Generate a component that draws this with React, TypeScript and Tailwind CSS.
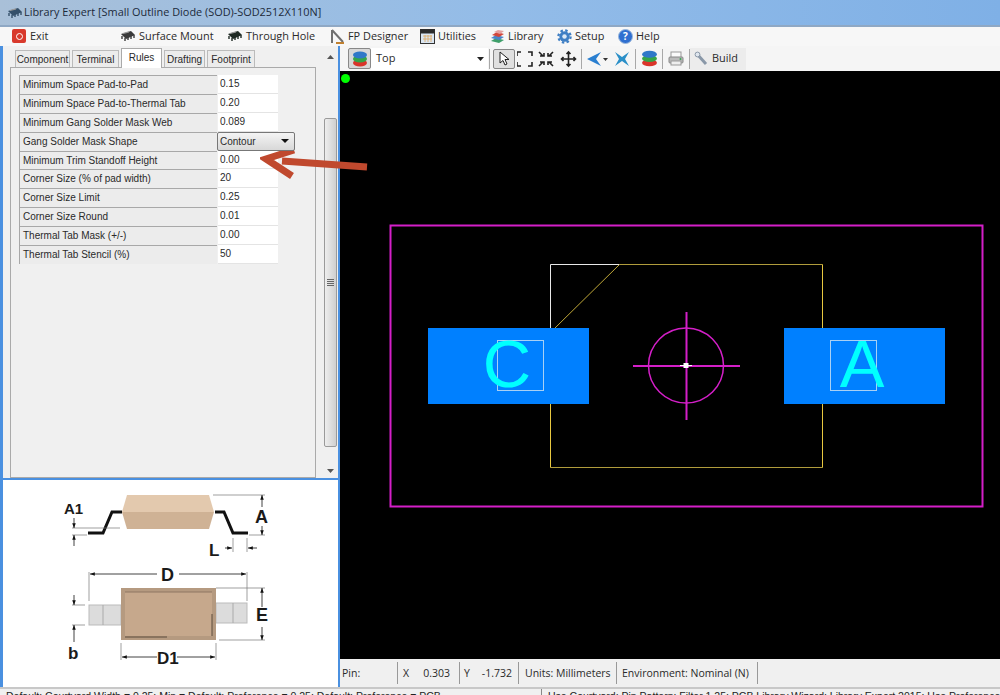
import { Fragment } from 'react';

const rows: [string, string][] = [
  ['Minimum Space Pad-to-Pad', '0.15'],
  ['Minimum Space Pad-to-Thermal Tab', '0.20'],
  ['Minimum Gang Solder Mask Web', '0.089'],
  ['Gang Solder Mask Shape', 'Contour'],
  ['Minimum Trim Standoff Height', '0.00'],
  ['Corner Size (% of pad width)', '20'],
  ['Corner Size Limit', '0.25'],
  ['Corner Size Round', '0.01'],
  ['Thermal Tab Mask (+/-)', '0.00'],
  ['Thermal Tab Stencil (%)', '50'],
];

const tabs: [string, string][] = [
  ['Component', 'w-[55px]'],
  ['Terminal', 'w-[47px]'],
  ['Rules', 'w-[41px]'],
  ['Drafting', 'w-[41px]'],
  ['Footprint', 'w-[48px]'],
];

function Chip({ color }: { color: string }) {
  return (
    <svg width="16" height="14" viewBox="0 0 16 14">
      <path d="M1 5L11 2L15 6L6 10z" fill={color} />
      <path d="M2 7V10M5 9V12M8 8V11M11 7V10M14 6V9" stroke={color} strokeWidth="1.4" />
      <path d="M3 4.5L9 2.8" stroke="#9a9a9a" strokeWidth="1.2" />
    </svg>
  );
}

function Stack({ size = 16 }: { size?: number }) {
  return (
    <svg width={size} height={size} viewBox="0 0 16 16">
      <ellipse cx="8" cy="12" rx="7" ry="3.4" fill="#d9342a" />
      <ellipse cx="8" cy="8" rx="7" ry="3.4" fill="#35a548" />
      <ellipse cx="8" cy="4" rx="7" ry="3.4" fill="#2f78c8" />
    </svg>
  );
}

function MenuItem({ icon, label, w }: { icon: React.ReactNode; label: string; w: string }) {
  return (
    <div className={`flex items-center gap-[3px] ${w}`}>
      {icon}
      <span>{label}</span>
    </div>
  );
}

function Divider({ className = '' }: { className?: string }) {
  return <div className={`w-px h-[20px] bg-[#a8a8a8] ${className}`} />;
}

function Canvas() {
  return (
    <div className="flex-1 bg-black relative overflow-hidden">
      <svg width="660" height="588" viewBox="340 71 660 588" className="block">
        <circle cx="345.5" cy="78.5" r="4.5" fill="#00ff00" />
        <rect x="390.5" y="225.5" width="592" height="281" fill="none" stroke="#d41fc8" strokeWidth="2" />
        <path d="M550.5 264.5H619.5M550.5 264.5V328" stroke="#e8e8e8" fill="none" />
        <path d="M619.5 264.5H822.5M822.5 467.5H550.5" stroke="#b09c3c" fill="none" />
        <path d="M822.5 264.5V467.5M550.5 467.5V403" stroke="#e8c840" fill="none" />
        <path d="M619.5 264.5L555 328" stroke="#c0a838" fill="none" />
        <rect x="428" y="328" width="161" height="76" fill="#0080ff" />
        <rect x="784" y="328" width="161" height="76" fill="#0080ff" />
        <rect x="497.5" y="340.5" width="46" height="50" fill="none" stroke="#a8d0f4" />
        <rect x="830.5" y="340.5" width="46" height="50" fill="none" stroke="#a8d0f4" />
        <circle cx="686" cy="365.5" r="37.5" fill="none" stroke="#d41fc8" strokeWidth="1.5" />
        <path d="M633 366H740M686.5 312V420" stroke="#d41fc8" strokeWidth="2" />
        <path d="M680 365.5H692" stroke="#fff" />
        <rect x="683.5" y="363" width="5" height="5" fill="#fff" />
        <text x="507" y="387" textAnchor="middle" fill="#00ffff" fontSize="67" fontFamily="Liberation Sans, sans-serif">C</text>
        <text x="862" y="387" textAnchor="middle" fill="#00ffff" fontSize="67" fontFamily="Liberation Sans, sans-serif">A</text>
      </svg>
    </div>
  );
}

function PackageDrawing() {
  const label = { fontFamily: 'Liberation Sans, sans-serif', fontSize: 18, fill: '#1a1a1a', fontWeight: 700 };
  return (
    <svg width="335" height="207" viewBox="3 480 335 207" className="block">
      <defs>
        <marker id="arr" viewBox="0 0 6 6" refX="6" refY="3" markerWidth="6" markerHeight="6" orient="auto-start-reverse">
          <path d="M0 0.8L6 3L0 5.2z" fill="#111" />
        </marker>
      </defs>
      {/* side view */}
      <path d="M88 533H103L112 512H122M215 512H224L233 533H248" fill="none" stroke="#111" strokeWidth="3" />
      <path d="M127 495H209L214 512H122z" fill="#e3c9ae" />
      <path d="M122 512H214L209 529H127z" fill="#cfb295" />
      <g stroke="#777" strokeWidth="0.7" fill="none">
        <path d="M213 495H265M249 535H265M72 528H120M72 535H87M233 538V552M247 538V552" />
      </g>
      <g stroke="#111" strokeWidth="0.8" fill="none" markerEnd="url(#arr)">
        <path d="M262 507V495" />
        <path d="M262 526V535" />
        <path d="M74 518V528" />
        <path d="M74 546V535" />
        <path d="M225 548H232" />
        <path d="M257 548H248" />
      </g>
      {/* top view */}
      <rect x="89" y="605" width="32" height="20" fill="#dcdcdc" stroke="#bbb" />
      <path d="M103 605V625" stroke="#aaa" />
      <rect x="216" y="603" width="31" height="20" fill="#dcdcdc" stroke="#bbb" />
      <path d="M233 603V623" stroke="#aaa" />
      <rect x="121" y="588" width="95" height="52" fill="#c6a88c" />
      <path d="M121 588H216V640H121zM125 592V636H212V592z" fill="#b59a80" fillRule="evenodd" />
      <path d="M125 592H212" stroke="#8e7662" />
      <path d="M125 637H167M212 614V636" stroke="#5d4c3c" strokeWidth="1" />
      <g stroke="#777" strokeWidth="0.7" fill="none">
        <path d="M89 572V601M247 572V601M216 588H265M219 640H265M121 643V660M216 643V660M72 605H85M72 625H85" />
      </g>
      <g stroke="#111" strokeWidth="0.8" fill="none" markerEnd="url(#arr)">
        <path d="M157 574H90" />
        <path d="M179 574H246" />
        <path d="M262 607V588" />
        <path d="M262 627V640" />
        <path d="M74 595V605" />
        <path d="M74 642V625" />
        <path d="M157 657H122" />
        <path d="M177 657H215" />
      </g>
      <text x="64" y="514" style={{ ...label, fontSize: 15 }}>A1</text>
      <text x="255" y="523" style={label}>A</text>
      <text x="209" y="556" style={{ ...label, fontSize: 17 }}>L</text>
      <text x="161" y="581" style={label}>D</text>
      <text x="256" y="621" style={label}>E</text>
      <text x="68" y="659" style={{ ...label, fontSize: 17 }}>b</text>
      <text x="157" y="664" style={{ ...label, fontSize: 17 }}>D1</text>
    </svg>
  );
}

export default function App() {
  return (
    <div className="w-[1000px] h-[695px] overflow-hidden relative bg-[#f0f0f0] text-[#2a2a2a] font-['Liberation_Sans',sans-serif]">
      {/* title bar */}
      <div className="h-[25px] bg-gradient-to-r from-[#a9c0d8] via-[#93bce8] to-[#7fb0e6] flex items-center pl-[7px] gap-[1px] text-[10.9px] text-[#1c2a3a] font-['Open_Sans',sans-serif]">
        <Chip color="#35506a" />
        <span>Library Expert [Small Outline Diode (SOD)-SOD2512X110N]</span>
      </div>

      {/* menu */}
      <div className="h-[21px] border-t-2 border-[#8fa8c4] flex items-center text-[10.9px] pl-[12px] bg-[#f7f7f7] font-['Open_Sans',sans-serif]">
        <MenuItem
          w="w-[108px]"
          label="Exit"
          icon={
            <div className="w-[14px] h-[14px] rounded-[2px] bg-[#d8392c] flex items-center justify-center mr-[1px]">
              <div className="w-[7px] h-[7px] rounded-full border border-white" />
            </div>
          }
        />
        <MenuItem w="w-[107px]" label="Surface Mount" icon={<Chip color="#3a3a3a" />} />
        <MenuItem w="w-[103px]" label="Through Hole" icon={<Chip color="#1f2a24" />} />
        <MenuItem
          w="w-[90px]"
          label="FP Designer"
          icon={
            <svg width="15" height="15" viewBox="0 0 15 15">
              <path d="M2 1L13 13M2 1V14" stroke="#707070" strokeWidth="2" fill="none" />
              <path d="M6 14H14" stroke="#c08030" strokeWidth="2" />
            </svg>
          }
        />
        <MenuItem
          w="w-[70px]"
          label="Utilities"
          icon={
            <svg width="15" height="15" viewBox="0 0 15 15">
              <rect x="0.5" y="0.5" width="14" height="14" fill="#dbe6f2" stroke="#333" />
              <rect x="0.5" y="0.5" width="14" height="4" fill="#2c2c2c" />
              <path d="M3 7H12M3 10H12M5 6V13M8 6V13M11 6V13" stroke="#e0a860" strokeWidth="0.8" />
            </svg>
          }
        />
        <MenuItem
          w="w-[67px]"
          label="Library"
          icon={
            <svg width="15" height="15" viewBox="0 0 15 15">
              <path d="M1 12L9 14L14 11L6 9z" fill="#3f9f6a" />
              <path d="M1 9L9 11L14 8L6 6z" fill="#4a84c8" />
              <path d="M2 6L9 8L14 5L7 3z" fill="#d2463c" />
              <path d="M4 3L10 5L14 2L8 1z" fill="#e4a0a0" />
            </svg>
          }
        />
        <MenuItem
          w="w-[61px]"
          label="Setup"
          icon={
            <svg width="15" height="15" viewBox="0 0 16 16">
              <circle cx="8" cy="8" r="5.5" fill="#3f7fc4" />
              <circle cx="8" cy="8" r="6.5" fill="none" stroke="#3f7fc4" strokeWidth="2.4" strokeDasharray="2.6 2.5" />
              <circle cx="8" cy="8" r="2.4" fill="#dce9f6" />
            </svg>
          }
        />
        <MenuItem
          w="w-[50px]"
          label="Help"
          icon={
            <div className="w-[15px] h-[15px] rounded-full bg-[#2f6fd0] border border-[#9ab8dc] text-white text-[10px] leading-[13px] text-center font-bold">
              ?
            </div>
          }
        />
      </div>

      <div className="flex h-[641px]">
        {/* left column */}
        <div className="w-[340px] shrink-0 flex flex-col border-l-[3px] border-r-2 border-[#4a90e0]">
          <div className="h-[434px] flex bg-[#f0f0f0] border-b-2 border-[#4a90e0]">
            <div className="w-[320px] pl-[7px] pt-[2px] relative">
              <div className="flex items-end gap-[2px] h-[19px] pl-[5px] text-[10px]">
                {tabs.map(([t, w]) => (
                  <div
                    key={t}
                    className={
                      t === 'Rules'
                        ? `${w} h-[20px] text-center bg-white border border-b-0 border-[#aaa] leading-[17px] relative z-10 mb-[-1px]`
                        : `${w} h-[17px] text-center bg-[#ececec] border border-b-0 border-[#bbb] leading-[18px]`
                    }
                  >
                    {t}
                  </div>
                ))}
              </div>
              <div className="h-[411px] border border-[#aaa] bg-[#f0f0f0] pl-[8px] pt-[7px] w-[306px]">
                <div className="grid grid-cols-[198px_61px] auto-rows-[18.9px] text-[10px]">
                  {rows.map(([name, value]) => (
                    <Fragment key={name}>
                      <div className="border-t border-l border-[#a8a8a8] bg-[#ececec] pl-[3px] leading-[18px] whitespace-nowrap">
                        {name}
                      </div>
                      {value === 'Contour' ? (
                        <div className="bg-gradient-to-b from-[#f4f4f4] to-[#d8d8d8] border border-[#777] rounded-[2px] w-[78px] h-[19px] flex items-center justify-between pl-[2px] pr-[5px] relative z-10">
                          <span>{value}</span>
                          <svg width="8" height="4" viewBox="0 0 8 4">
                            <path d="M0 0H8L4 4z" fill="#111" />
                          </svg>
                        </div>
                      ) : (
                        <div className="bg-white border-b border-[#e4e4e4] pl-[2px] leading-[18px] ml-px">{value}</div>
                      )}
                    </Fragment>
                  ))}
                </div>
              </div>
            </div>
            {/* scrollbar */}
            <div className="w-[15px] flex flex-col items-center text-[#444] bg-[#f0f0f0]">
              <div className="h-[22px] flex items-center justify-center">
                <svg width="7" height="4" viewBox="0 0 7 4">
                  <path d="M0 4H7L3.5 0z" fill="#555" />
                </svg>
              </div>
              <div className="h-[329px] w-[13px] mt-[50px] rounded-[2px] border border-[#9a9a9a] bg-gradient-to-r from-[#eeeeee] to-[#cfcfcf] flex flex-col gap-px items-center justify-center">
                <div className="w-[7px] h-px bg-[#666]" />
                <div className="w-[7px] h-px bg-[#666]" />
                <div className="w-[7px] h-px bg-[#666]" />
                <div className="w-[7px] h-px bg-[#666]" />
              </div>
              <div className="flex-1 flex items-end pb-[5px]">
                <svg width="7" height="4" viewBox="0 0 7 4">
                  <path d="M0 0H7L3.5 4z" fill="#555" />
                </svg>
              </div>
            </div>
          </div>
          <div className="flex-1 bg-white">
            <PackageDrawing />
          </div>
        </div>

        {/* right column */}
        <div className="flex-1 flex flex-col">
          <div className="h-[25px] bg-[#f5f5f5] flex items-center pl-[8px] text-[11px] font-['Open_Sans',sans-serif]">
            <div className="w-[23px] h-[21px] border border-[#888] rounded-[2px] bg-[#d8d8d8] flex items-center justify-center">
              <Stack />
            </div>
            <div className="w-[117px] h-[22px] bg-white flex items-center justify-between pl-[5px] pr-[4px]">
              <span>Top</span>
              <svg width="7" height="4" viewBox="0 0 7 4">
                <path d="M0 0H7L3.5 4z" fill="#222" />
              </svg>
            </div>
            <Divider className="ml-[1px]" />
            <div className="w-[22px] h-[20px] ml-[3px] border border-[#888] rounded-[2px] bg-[#e0e0e0] flex items-center justify-center">
              <svg width="12" height="15" viewBox="0 0 12 15">
                <path d="M2 1V12L5 9.5L7 14L9 13L7 8.5H11z" fill="#fff" stroke="#222" />
              </svg>
            </div>
            <svg width="60" height="18" viewBox="0 0 60 18" className="ml-[2px]">
              <g stroke="#222" strokeWidth="1.6" fill="none">
                <path d="M0 6V2H4M11 2H15V6M0 12V16H4M15 12V16H11" />
                <path d="M22 2L26 6M36 2L32 6M22 16L26 12M36 16L32 12M23 6H27V3M35 6H31V3M23 12H27V15M35 12H31V15" />
                <path d="M51.5 2V16M44.5 9H58.5M49.5 4L51.5 2L53.5 4M49.5 14L51.5 16L53.5 14M46.5 7L44.5 9L46.5 11M56.5 7L58.5 9L56.5 11" />
              </g>
            </svg>
            <Divider className="ml-[4px]" />
            <svg width="51" height="18" viewBox="0 0 51 18" className="ml-[2px]">
              <path d="M3 9L17 2L12 9L17 16z" fill="#2a7fd0" />
              <path d="M19 8H24L21.5 11z" fill="#333" />
              <path d="M31 2L38 7L45 2L41 9L45 16L38 11L31 16L35 9z" fill="#2a8fc8" />
            </svg>
            <Divider />
            <div className="ml-[5px]">
              <Stack size={17} />
            </div>
            <Divider className="ml-[4px]" />
            <svg width="16" height="15" viewBox="0 0 16 15" className="ml-[5px]">
              <rect x="3" y="1" width="10" height="6" fill="#fafafa" stroke="#999" />
              <rect x="1" y="6" width="14" height="6" rx="1" fill="#bbb" stroke="#888" />
              <rect x="3" y="10" width="10" height="4" fill="#eee" stroke="#999" />
              <circle cx="12.5" cy="8" r="1" fill="#3aa655" />
            </svg>
            <Divider className="ml-[5px]" />
            <div className="flex items-center gap-[3px] bg-[#ececec] h-[22px] pl-[4px] pr-[8px] text-[10.9px]">
              <svg width="15" height="15" viewBox="0 0 15 15">
                <path d="M3 3L12 13" stroke="#8a98a8" strokeWidth="3" />
                <circle cx="3.5" cy="3.5" r="2.4" fill="#dfe6ee" stroke="#8a98a8" />
              </svg>
              <span>Build</span>
            </div>
          </div>
          <Canvas />
          <div className="h-[28px] bg-[#f0f0f0] flex items-center text-[10.5px] font-['Open_Sans',sans-serif]">
            <div className="w-[58px] pl-[2px] h-[22px] leading-[22px] border-r border-[#999]">Pin:</div>
            <div className="w-[62px] pl-[5px] h-[22px] leading-[22px] border-r border-[#999] flex justify-between pr-[9px]">
              <span>X</span>
              <span>0.303</span>
            </div>
            <div className="w-[59px] pl-[4px] h-[22px] leading-[22px] border-r border-[#999] flex justify-between pr-[6px]">
              <span>Y</span>
              <span>-1.732</span>
            </div>
            <div className="w-[98px] pl-[6px] h-[22px] leading-[22px] border-r border-[#999] whitespace-nowrap">Units: Millimeters</div>
            <div className="w-[141px] pl-[5px] h-[22px] leading-[22px] border-r border-[#999] whitespace-nowrap">Environment: Nominal (N)</div>
          </div>
        </div>
      </div>

      {/* status line, the window is cut off here */}
      <div className="h-[8px] border-t-2 border-[#c8c8c8] bg-[#f0f0f0] flex text-[10.5px] leading-[14px] text-[#222] overflow-hidden whitespace-nowrap">
        <div className="w-[542px] shrink-0 pl-[6px] border-r border-[#888]">Default: Courtyard Width = 0.25; Min = Default; Preference = 0.25; Default: Preference = PCB</div>
        <div className="pl-[6px]">Use Courtyard; Pin Pattern; Filter 1.25; PCB Library Wizard; Library Expert 2015; Use Preference</div>
      </div>

      {/* red arrow over the rules table */}
      <svg width="110" height="40" viewBox="0 0 110 40" className="absolute left-[260px] top-[145px] pointer-events-none">
        <path d="M107 22L22 16" stroke="#c0492e" strokeWidth="7" fill="none" />
        <path d="M34 5L6 14L32 31" stroke="#c0492e" strokeWidth="7" fill="none" />
      </svg>
    </div>
  );
}
